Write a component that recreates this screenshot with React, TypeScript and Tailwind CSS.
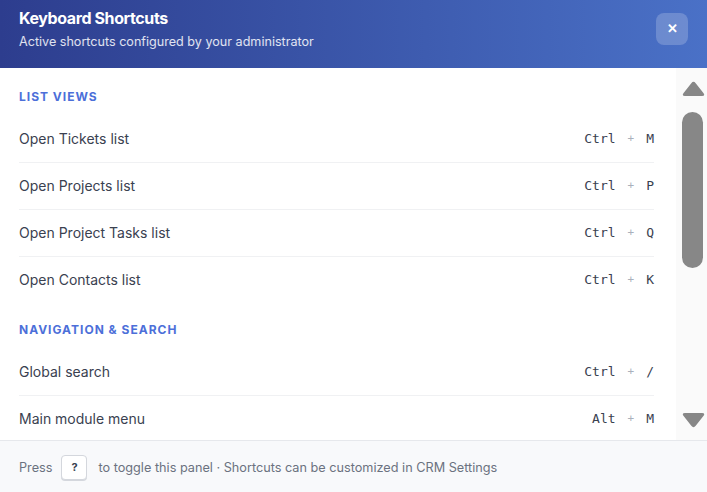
import React from "react";

type Shortcut = { label: string; keys: string[] };
type Section = { title: string; items: Shortcut[] };

const sections: Section[] = [
	{
		title: "List views",
		items: [
			{ label: "Open Tickets list", keys: ["Ctrl", "M"] },
			{ label: "Open Projects list", keys: ["Ctrl", "P"] },
			{ label: "Open Project Tasks list", keys: ["Ctrl", "Q"] },
			{ label: "Open Contacts list", keys: ["Ctrl", "K"] },
		],
	},
	{
		title: "Navigation & search",
		items: [
			{ label: "Global search", keys: ["Ctrl", "/"] },
			{ label: "Main module menu", keys: ["Alt", "M"] },
			{ label: "Quick create", keys: ["Alt", "N"] },
		],
	},
];

function Keys({ keys }: { keys: string[] }) {
	return (
		<div className="flex items-center gap-[12px] font-['DejaVu_Sans_Mono',monospace] text-[13px] text-[#3a4150]">
			{keys.map((k, i) => (
				<React.Fragment key={k + i}>
					{i > 0 && <span className="text-[11px] text-[#aab0bc]">+</span>}
					<span>{k}</span>
				</React.Fragment>
			))}
		</div>
	);
}

function Scrollbar() {
	return (
		<div className="flex w-[31px] shrink-0 flex-col items-start bg-[#fafafa] pl-[6px] pt-[13px] pb-[12px]">
			<svg width="23" height="16" viewBox="0 0 23 16" aria-hidden>
				<path d="M9.3 2.2 Q11.5 -0.6 13.7 2.2 L21.6 12.2 Q23.4 15 20 15 L3 15 Q-0.4 15 1.4 12.2 Z" fill="#878787" />
			</svg>
			<div className="mt-[15px] h-[156px] w-[21px] rounded-full bg-[#878787]" />
			<div className="flex-1" />
			<svg width="23" height="16" viewBox="0 0 23 16" aria-hidden>
				<path d="M9.3 13.8 Q11.5 16.6 13.7 13.8 L21.6 3.8 Q23.4 1 20 1 L3 1 Q-0.4 1 1.4 3.8 Z" fill="#878787" />
			</svg>
		</div>
	);
}

export default function App() {
	return (
		<div className="flex h-[492px] w-[707px] flex-col overflow-hidden bg-white font-['Inter',sans-serif]">
			{/* Header */}
			<div className="flex h-[68px] shrink-0 items-start justify-between bg-linear-to-r from-[#2d3d8e] to-[#4a71c7] pl-[19px] pr-[19px]">
				<div className="pt-[7px]">
					<h1 className="text-[16px] leading-[22px] font-bold tracking-[-0.4px] text-white">
						Keyboard Shortcuts
					</h1>
					<p className="mt-[4px] text-[12.6px] leading-[18px] text-white/85">
						Active shortcuts configured by your administrator
					</p>
				</div>
				<button className="mt-[13px] flex h-8 w-8 items-center justify-center rounded-lg bg-white/20 text-[13px] font-bold text-white">
					✕
				</button>
			</div>

			{/* Body */}
			<div className="flex min-h-0 flex-1">
				<div className="min-w-0 flex-1 overflow-hidden pl-[19px] pr-[22px]">
					{sections.map((s, si) => (
						<div key={s.title} className={si === 0 ? "pt-[21px]" : "pt-[19px]"}>
							<h2 className="mb-[11px] text-[12px] leading-4 font-bold uppercase tracking-[1px] text-[#4c6fd9]">
								{s.title}
							</h2>
							{s.items.map((it, i) => (
								<div
									key={it.label}
									className={`flex h-[46px] items-center justify-between ${
										i < s.items.length - 1 ? "box-content border-b border-[#f0f1f3]" : ""
									}`}
								>
									<span className="-mt-[1px] text-[14px] leading-5 text-[#3a4150]">{it.label}</span>
									<Keys keys={it.keys} />
								</div>
							))}
						</div>
					))}
				</div>
				<Scrollbar />
			</div>

			{/* Footer */}
			<div className="flex h-[52px] shrink-0 items-center border-t border-[#e6e8ec] bg-[#f8f9fb] pl-[19px] pt-[2px] text-[12.7px] text-[#6b7280]">
				<span>Press</span>
				<kbd className="mx-[9px] flex h-[25px] w-[26px] items-center justify-center rounded-[4px] border border-[#d4d7dd] bg-white font-['Inter',sans-serif] text-[11px] font-bold text-[#374151] shadow-[0_1px_0_#d4d7dd]">
					?
				</kbd>
				<span className="ml-[2px]">
					to toggle this panel · Shortcuts can be customized in CRM Settings
				</span>
			</div>
		</div>
	);
}
